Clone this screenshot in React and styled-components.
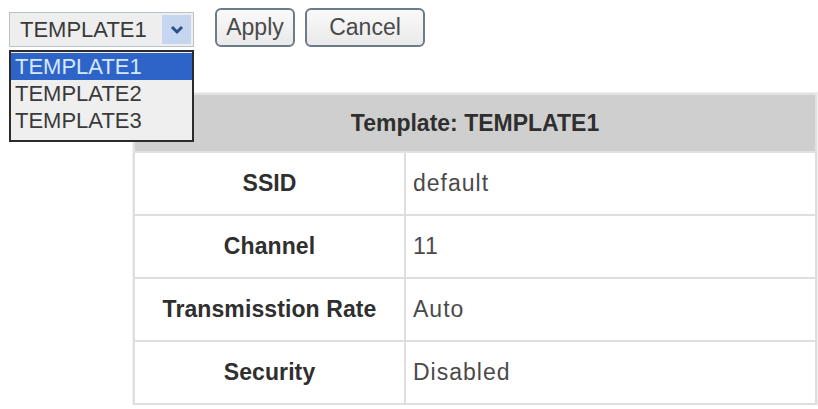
import React from "react";
import styled, { createGlobalStyle } from "styled-components";

const GlobalStyle = createGlobalStyle`
  body {
    margin: 0;
    background: #ffffff;
    font-family: "Liberation Sans", Arial, sans-serif;
  }
`;

const Page = styled.div`
  padding: 8px 0 0 9px;
  width: 807px;
`;

const Toolbar = styled.div`
  display: flex;
  align-items: flex-start;
`;

const SelectWrap = styled.div`
  position: relative;
  margin-top: 4px;
  width: 185px;
`;

const SelectBox = styled.div`
  box-sizing: border-box;
  height: 35px;
  display: flex;
  align-items: center;
  justify-content: space-between;
  border: 1px solid #b9c1cc;
  background: #eeeeee;
  padding: 2px 2px 2px 10px;
  font-size: 22px;
  color: #3a3a3a;
`;

const ArrowButton = styled.div`
  width: 29px;
  height: 29px;
  display: flex;
  align-items: center;
  justify-content: center;
  background: #c7d6f0;
`;

const DropList = styled.ul`
  position: absolute;
  top: 38px;
  left: 0;
  box-sizing: border-box;
  width: 185px;
  margin: 0;
  padding: 1px 0 6px;
  list-style: none;
  background: #efefef;
  border: 2px solid #2b2b2b;
  z-index: 2;
`;

const DropItem = styled.li`
  height: 27px;
  line-height: 27px;
  padding-left: 4px;
  font-size: 22px;
  color: ${(p) => (p.$active ? "#d6e8ff" : "#3a3a3a")};
  background: ${(p) => (p.$active ? "#2e64c8" : "transparent")};
`;

const Button = styled.button`
  box-sizing: border-box;
  height: 39px;
  width: ${(p) => p.$width}px;
  margin-left: ${(p) => p.$gap}px;
  border: 2px solid #6c7b8c;
  border-radius: 6px;
  background: linear-gradient(#fafafa, #e9e9e9);
  font-family: "Liberation Sans", Arial, sans-serif;
  font-size: 23px;
  color: #4a4a4a;
  padding: 0;
`;

const Table = styled.table`
  margin: 46px 0 0 124px;
  width: 684px;
  border-collapse: collapse;
  border: 2px solid #dedede;
  box-shadow: 0 0 0 1px #f0f0f0;
`;

const HeaderCell = styled.th`
  height: 56px;
  padding: 0;
  background: #cfcfcf;
  border: 2px solid #e2e2e2;
  font-size: 23px;
  font-weight: bold;
  color: #2f2f2f;
`;

const LabelCell = styled.td`
  width: 269px;
  height: 61px;
  padding: 0;
  border: 2px solid #dedede;
  text-align: center;
  font-size: 23px;
  font-weight: bold;
  color: #2f2f2f;
  letter-spacing: 0.1px;
`;

const ValueCell = styled.td`
  border: 2px solid #dedede;
  padding: 0 0 0 7px;
  font-size: 23px;
  letter-spacing: 1px;
  color: #4a4a4a;
`;

const Chevron = () => (
  <svg width="14" height="10" viewBox="0 0 14 10">
    <path d="M2 2 L7 7 L12 2" fill="none" stroke="#2a4f8a" strokeWidth="3" />
  </svg>
);

const rows = [
  ["SSID", "default"],
  ["Channel", "11"],
  ["Transmisstion Rate", "Auto"],
  ["Security", "Disabled"],
];

export default function App() {
  return (
    <>
      <GlobalStyle />
      <Page>
        <Toolbar>
          <SelectWrap>
            <SelectBox>
              <span>TEMPLATE1</span>
              <ArrowButton>
                <Chevron />
              </ArrowButton>
            </SelectBox>
            <DropList>
              <DropItem $active>TEMPLATE1</DropItem>
              <DropItem>TEMPLATE2</DropItem>
              <DropItem>TEMPLATE3</DropItem>
            </DropList>
          </SelectWrap>
          <Button $width={80} $gap={21}>Apply</Button>
          <Button $width={120} $gap={10}>Cancel</Button>
        </Toolbar>
        <Table>
          <thead>
            <tr>
              <HeaderCell colSpan={2}>Template: TEMPLATE1</HeaderCell>
            </tr>
          </thead>
          <tbody>
            {rows.map(([label, value]) => (
              <tr key={label}>
                <LabelCell>{label}</LabelCell>
                <ValueCell>{value}</ValueCell>
              </tr>
            ))}
          </tbody>
        </Table>
      </Page>
    </>
  );
}
